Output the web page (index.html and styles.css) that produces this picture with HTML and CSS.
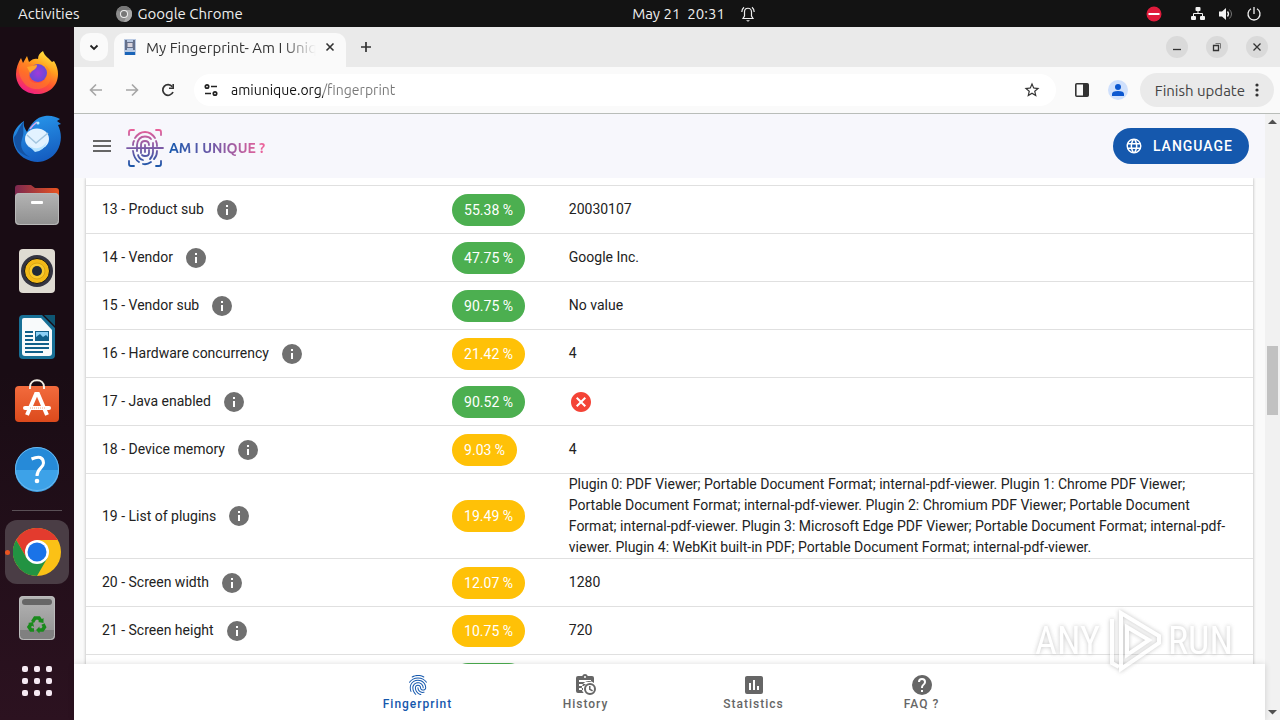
FILE: index.html
```html
<!DOCTYPE html>
<html lang="en">
<head>
  <meta charset="UTF-8" />
  <meta name="viewport" content="width=device-width, initial-scale=1.0" />
  <title>My Fingerprint- Am I Unique ?</title>
  <link rel="stylesheet" href="styles.css">
</head>
<body>
  <svg class="sprite" aria-hidden="true">
    <symbol id="info" viewBox="0 0 24 24"><path d="M13,9H11V7H13M13,17H11V11H13M12,2A10,10 0 0,0 2,12A10,10 0 0,0 12,22A10,10 0 0,0 22,12A10,10 0 0,0 12,2Z"/></symbol>
  </svg>

  <header class="topbar">
    <div class="topbar-left">
      <span>Activities</span>
      <span class="app-name">
        <svg width="16" height="16" viewBox="0 0 16 16"><circle cx="8" cy="8" r="8" fill="#8c8c8c"/><path d="M8 8L1 4A8 8 0 0 1 15 4Z" fill="#777"/><path d="M8 4H15A8 8 0 0 1 8 16L11 9Z" fill="#a8a8a8"/><circle cx="8" cy="8" r="4" fill="#eee"/><circle cx="8" cy="8" r="3" fill="#777"/></svg>
        Google Chrome
      </span>
    </div>
    <div class="clock">
      <span>May 21&nbsp; 20:31</span>
      <svg width="14" height="16" viewBox="0 0 14 16" fill="none" stroke="#eee" stroke-width="1.2"><path d="M2 12.5H12L10.500 10V6C10.500 1 3.500 1 3.500 6V10Z"/><path d="M.8 6Q.8 3 3 1.200M13.200 6Q13.200 3 11 1.200"/><path d="M5 14.200H9L7 15.800Z" fill="#eee" stroke="none"/></svg>
    </div>
    <div class="tray">
      <svg class="tray-stop" width="16" height="16" viewBox="0 0 16 16"><circle cx="8" cy="8" r="7.500" fill="#e01b3c"/><path d="M2.500 7H13.500V9H2.500Z" fill="#fff"/></svg>
      <svg width="16" height="16" viewBox="0 0 16 16" fill="#f2f2f2"><rect x="5.500" y="1" width="5" height="4" rx="1"/><rect x="1" y="10" width="5" height="4" rx="1"/><rect x="10" y="10" width="5" height="4" rx="1"/><path d="M8 4V7.500M3.500 11V7.500H12.500V11" stroke="#f2f2f2" fill="none"/></svg>
      <svg width="16" height="16" viewBox="0 0 16 16" fill="#f2f2f2"><path d="M1 5.500H4L8 2V14L4 10.500H1Z"/><path d="M9.500 5.500Q11.500 8 9.500 10.500" stroke="#f2f2f2" fill="none" stroke-width="1.300"/><path d="M11.500 3.500Q15.500 8 11.500 12.500" stroke="#777" fill="none"/></svg>
      <svg width="16" height="16" viewBox="0 0 16 16" fill="none" stroke="#f2f2f2" stroke-width="1.300"><path d="M5 2.800A6 6 0 1 0 11 2.800M8 1V8"/></svg>
    </div>
  </header>

  <div class="desktop">
    <nav class="dock" aria-label="Dock">
      <button class="dock-item" aria-label="Firefox">
        <svg viewBox="0 0 48 48">
          <defs>
            <linearGradient id="fox" x1=".8" y1="0" x2=".3" y2="1"><stop offset="0" stop-color="#fff044"/><stop offset=".35" stop-color="#ffa01e"/><stop offset=".65" stop-color="#ff5630"/><stop offset="1" stop-color="#f01c88"/></linearGradient>
            <radialGradient id="globe"><stop offset="0" stop-color="#a03ad8"/><stop offset="1" stop-color="#6549d8"/></radialGradient>
          </defs>
          <path d="M24 45C11 45 3 36 3 25C3 19 5 14 8 9L10 14L14 7L16 13C19 10 22 9 25 10C25 6 27 4 30 2C32 8 36 9 39 13L41 12C44 17 45 21 45 25C45 37 36 45 24 45Z" fill="url(#fox)"/>
          <circle cx="25" cy="24" r="9" fill="url(#globe)"/>
          <path d="M6 17C12 12 17 16 24 16C24 21 19 21 18 24C14 28 17 34 24 34C33 34 37 26 32 16C39 21 39 29 36 34C31 42 17 42 11 34C7 29 5 23 6 17Z" fill="#ff8422" opacity=".5"/>
          <path d="M14 18L24 16C24 20 19 21 17 24Z" fill="#ffa52a"/>
        </svg>
      </button>
      <button class="dock-item" aria-label="Thunderbird">
        <svg viewBox="0 0 48 48">
          <defs><linearGradient id="bird" x1=".2" y1="0" x2=".5" y2="1"><stop offset="0" stop-color="#2899ed"/><stop offset="1" stop-color="#155dc0"/></linearGradient></defs>
          <path d="M0 22C1 15 5 10 11 6C10 11 12 14 14 17C18 9 23 2 32 1C38 0 43 2 47 4L44 6L48 9L45 10C49 18 49 28 44 36C38 45 28 49 18 46C7 43 0 34 0 22Z" fill="url(#bird)"/>
          <path d="M1 22C4 20 5 13 11 6C9 14 12 16 9 24C6 33 11 39 17 42C7 40 1 33 1 22Z" fill="#1453a3"/>
          <ellipse cx="24" cy="24" rx="12" ry="10.500" fill="#e2f2ff"/>
          <path d="M14 20L23 28L35 18" fill="none" stroke="#a4c6df" stroke-width="1.500"/>
          <path d="M13 28Q24 39 34 27Q31 36 22 37Z" fill="#b8e4ff"/>
          <path d="M17 14Q20 10 24 7" fill="none" stroke="#e1a6e7" stroke-width="1.500"/><circle cx="25" cy="8" r="1.500" fill="#b3ecff"/>
        </svg>
      </button>
      <button class="dock-item" aria-label="Files">
        <svg viewBox="0 0 48 48">
          <defs><linearGradient id="folder"><stop offset="0" stop-color="#7b2850"/><stop offset="1" stop-color="#e95420"/></linearGradient><linearGradient id="grey" x1="0" y1="0" x2="0" y2="1"><stop offset="0" stop-color="#b4b4b4"/><stop offset="1" stop-color="#909090"/></linearGradient></defs>
          <path d="M2 20V7Q2 4 5 4H18L22 7H43Q46 7 46 10V20Z" fill="url(#folder)"/>
          <rect x="2" y="12" width="44" height="32" rx="4" fill="url(#grey)"/><rect x="2.500" y="12.500" width="43" height="31" rx="4" fill="none" stroke="#b9b9b9"/>
          <rect x="18" y="20" width="12" height="3" rx="1" fill="#fff"/>
        </svg>
      </button>
      <button class="dock-item" aria-label="Rhythmbox">
        <svg viewBox="0 0 48 48"><rect x="6" y="2" width="36" height="44" rx="4" fill="#dfdbd2"/><circle cx="24" cy="24" r="16" fill="#343441"/><circle cx="24" cy="24" r="12.500" fill="#f3b917" stroke="#151515"/><circle cx="24" cy="24" r="8" fill="#f8c92c" stroke="#d9a715"/><circle cx="24" cy="24" r="5" fill="#202b38"/></svg>
      </button>
      <button class="dock-item" aria-label="LibreOffice Writer">
        <svg viewBox="0 0 48 48">
          <path d="M10 2H29L42 15V42Q42 46 38 46H10Q6 46 6 42V6Q6 2 10 2Z" fill="#187096"/><path d="M31 2H42V13Z" fill="#0e5673"/>
          <path d="M11 5H28L39 17V40Q39 43 36 43H12Q9 43 9 40V7Q9 5 11 5Z" fill="#f8fafb"/>
          <path d="M12 19H20M12 23H20M12 27H20M12 31H36M12 35H36M12 39H30" stroke="#11608a" stroke-width="2"/>
          <rect x="22.500" y="18.500" width="13" height="9" fill="#8bcff5" stroke="#11608a"/><path d="M23 27V24L27 21L30 24L33 22L35 24V27Z" fill="#11608a"/>
        </svg>
      </button>
      <button class="dock-item" aria-label="Ubuntu Software">
        <svg viewBox="0 0 48 48">
          <defs><linearGradient id="bag" x1="0" y1="0" x2="0" y2="1"><stop offset="0" stop-color="#f26b3d"/><stop offset="1" stop-color="#dc4a1c"/></linearGradient></defs>
          <rect x="2" y="7" width="44" height="36" rx="4" fill="url(#bag)"/><path d="M17 10V8C17-1 31-1 31 8V10" fill="none" stroke="#f4eee4" stroke-width="2"/>
          <path d="M14 36L23 15H25L34 36" fill="none" stroke="#fff" stroke-width="4"/><rect x="10" y="27" width="28" height="4" rx="2" fill="#fff"/><path d="M17 29H32" stroke="#f3a685" stroke-dasharray="1 1"/>
        </svg>
      </button>
      <button class="dock-item" aria-label="Help">
        <svg viewBox="0 0 48 48"><circle cx="24" cy="24" r="22" fill="#268ad8"/><path d="M2 25H46A22 22 0 0 1 2 25Z" fill="#3da2e8"/><circle cx="24" cy="24" r="21.500" fill="none" stroke="#6ab8ee"/><path d="M18.500 14Q30 9 30.500 18C30.500 23 24 23 24 31" fill="none" stroke="#fff" stroke-width="3"/><circle cx="24" cy="36" r="2.300" fill="#fff"/></svg>
      </button>
      <hr>
      <button class="dock-item active" aria-label="Google Chrome">
        <svg viewBox="0 0 48 48"><circle cx="24" cy="24" r="24" fill="#fbc116"/><path d="M24 12H44.800A24 24 0 0 0 3.200 12L13.600 30Z" fill="#e33b2e"/><path d="M3.200 12A24 24 0 0 0 24 48L34.400 30L13.600 30Z" fill="#229342"/><circle cx="24" cy="24" r="12" fill="#fff"/><circle cx="24" cy="24" r="9.500" fill="#1a73e8"/></svg>
      </button>
      <button class="dock-item" aria-label="Trash">
        <svg viewBox="0 0 48 48"><rect x="6" y="2" width="36" height="44" rx="4" fill="url(#grey)"/><path d="M7 36H41V42Q41 45 38 45H10Q7 45 7 42Z" fill="#808080"/><rect x="6.500" y="2.500" width="35" height="43" rx="4" fill="none" stroke="#bcbcbc"/><rect x="9" y="5" width="30" height="6" rx="3" fill="#666"/>
          <g fill="none" stroke="#198a1c" stroke-width="3.500"><path d="M19.500 28L22 24H26L28 27"/><path d="M30 30L31.500 33L29.500 36H26"/><path d="M21 36H18L16 33L18 30"/></g><path d="M25 28L30.500 29V24ZM26.500 32.500L23 36L26.500 39.500ZM15 29L20 28L21 33Z" fill="#198a1c"/></svg>
      </button>
      <button class="dock-item apps" aria-label="Show Applications">
        <svg viewBox="0 0 48 48" fill="#f5e9f2"><g id="dots"><rect x="9" y="9" width="6" height="6" rx="2"/><rect x="21" y="9" width="6" height="6" rx="2"/><rect x="33" y="9" width="6" height="6" rx="2"/></g><use href="#dots" y="12"/><use href="#dots" y="24"/></svg>
      </button>
    </nav>

    <div class="browser">
      <div class="tabstrip">
        <button class="tab-search" aria-label="Search tabs"><svg width="14" height="14" viewBox="0 0 14 14"><path d="M3.500 5.500L7 9L10.500 5.500" fill="none" stroke="#222" stroke-width="1.800"/></svg></button>
        <div class="tab">
          <svg width="16" height="16" viewBox="0 0 16 16"><path d="M2 0H14V16H2Z" fill="#b9c9e2"/><path d="M3 1H5V3H11V1H13V11H11V9H5V11H3Z" fill="#65708a"/><path d="M5.500 4H10.500V8H5.500Z" fill="#d9d4dc"/><path d="M3 13H13V16H3Z" fill="#1a64b8"/></svg>
          <span class="tab-title">My Fingerprint- Am I Unique ?</span>
          <button class="plain" aria-label="Close tab"><svg width="12" height="12" viewBox="0 0 12 12"><path d="M2.500 2.500L9.500 9.500M9.500 2.500L2.500 9.500" stroke="#333" stroke-width="1.600"/></svg></button>
        </div>
        <button class="plain new-tab" aria-label="New tab"><svg width="14" height="14" viewBox="0 0 14 14"><path d="M7 2V12M2 7H12" stroke="#333" stroke-width="1.700"/></svg></button>
        <div class="window-buttons">
          <button aria-label="Minimize"><svg viewBox="0 0 22 22"><path d="M7 13.500H15"/></svg></button>
          <button aria-label="Restore"><svg viewBox="0 0 22 22"><path d="M7.500 9.500H12.500V14.500H7.500Z"/><path d="M9.500 7.500H14.500V12.500" stroke-width="1" stroke="#777"/></svg></button>
          <button aria-label="Close"><svg viewBox="0 0 22 22"><path d="M7.500 7.500L14.500 14.500M14.500 7.500L7.500 14.500"/></svg></button>
        </div>
      </div>

      <div class="toolbar">
        <button class="tool" aria-label="Back"><svg width="16" height="16" viewBox="0 0 16 16"><path d="M14 8H3M8 2.500L2.500 8L8 13.500" stroke="#a5a5a5"/></svg></button>
        <button class="tool" aria-label="Forward"><svg width="16" height="16" viewBox="0 0 16 16"><path d="M2 8H13M8 2.500L13.500 8L8 13.500" stroke="#a5a5a5"/></svg></button>
        <button class="tool" aria-label="Reload"><svg width="16" height="16" viewBox="0 0 16 16"><path d="M13 10A5.300 5.300 0 1 1 12.300 4.800" stroke-width="1.700"/><path d="M14 2V7H9V5.400H12.400V2Z" fill="#333" stroke="none"/></svg></button>
        <div class="omnibox">
          <svg width="16" height="16" viewBox="0 0 16 16" fill="none" stroke="#222" stroke-width="1.700"><circle cx="4" cy="4.500" r="1.700"/><path d="M8 4.500H14M2 11.500H8"/><circle cx="12" cy="11.500" r="1.700"/></svg>
          <input type="text" value="amiunique.org/fingerprint" aria-label="Address">
          <button class="plain" aria-label="Bookmark this tab"><svg width="18" height="18" viewBox="0 0 24 24" fill="#333"><path d="M22 9.240l-7.190-.62L12 2 9.190 8.630 2 9.240l5.460 4.730L5.820 21 12 17.270 18.180 21l-1.630-7.030L22 9.240zM12 15.400l-3.760 2.270 1-4.280-3.320-2.880 4.380-.38L12 6.100l1.710 4.040 4.380.38-3.320 2.880 1 4.280L12 15.400z"/></svg></button>
        </div>
        <button class="tool side-panel" aria-label="Side panel"><svg width="16" height="16" viewBox="0 0 16 16"><rect x="1.800" y="1.800" width="12.400" height="12.400" rx="1"/><path d="M9 2H14V14H9Z" fill="#333" stroke="none"/></svg></button>
        <button class="tool" aria-label="Profile"><svg width="20" height="20" viewBox="0 0 20 20"><circle cx="10" cy="10" r="10" fill="#cfe0fc" stroke="none"/><circle cx="10" cy="7" r="3" fill="#0b57d0" stroke="none"/><path d="M4 16V14Q4 11 10 11Q16 11 16 14V16Z" fill="#0b57d0" stroke="none"/></svg></button>
        <button class="update">Finish update <svg width="4" height="16" viewBox="0 0 4 16" fill="#333"><circle cx="2" cy="3" r="1.600"/><circle cx="2" cy="8" r="1.600"/><circle cx="2" cy="13" r="1.600"/></svg></button>
      </div>

      <div class="viewport">
        <div class="page">
          <header class="appbar">
            <button class="plain menu" aria-label="Menu"><svg width="24" height="24" viewBox="0 0 24 24" fill="#666"><path d="M3,6H21V8H3V6M3,11H21V13H3V11M3,16H21V18H3V16Z"/></svg></button>
            <a class="brand" href="#">
              <svg width="38" height="40" viewBox="0 0 38 40" fill="none" stroke="url(#ink)" stroke-width="1.800" stroke-linecap="round">
                <defs><linearGradient id="ink" gradientUnits="userSpaceOnUse" x1="0" y1="2" x2="0" y2="38"><stop offset="0" stop-color="#e8619a"/><stop offset=".5" stop-color="#7b5aa6"/><stop offset="1" stop-color="#1c56a8"/></linearGradient></defs>
                <path d="M3 7V4Q3 2 5 2H8M30 2H33Q35 2 35 4V7M35 33V36Q35 38 33 38H30M8 38H5Q3 38 3 36V33"/>
                <path d="M1 20.100L37 20"/>
                <path d="M9 10Q13 4 19 4Q25 4 29 10M7 17Q7 14 8 13M30 13Q31 15 31 18M7 23Q8 31 13 34M31 23Q31 28 28 31M17 36Q21 37 25 34"/>
                <path d="M11 23V17Q12 8.500 19 8.500Q23 8.500 25 11M27 15V24Q27 28 24 31M12 27Q13 31 17 32M15 25V17Q15 13 19 13Q23 13 23 17M23 22V25Q23 28 19 28Q17 28 16 27M19 17V24"/>
              </svg>
              <span>AM I UNIQUE ?</span>
            </a>
            <button class="language"><svg width="18" height="18" viewBox="0 0 24 24" fill="#fff"><path d="M16.360,14C16.440,13.340 16.500,12.680 16.500,12C16.500,11.320 16.440,10.660 16.360,10H19.740C19.900,10.640 20,11.310 20,12C20,12.690 19.900,13.360 19.740,14M14.590,19.560C15.190,18.450 15.650,17.250 15.970,16H18.920C17.960,17.650 16.430,18.930 14.590,19.560M14.340,14H9.660C9.560,13.340 9.500,12.680 9.500,12C9.500,11.320 9.560,10.650 9.660,10H14.340C14.430,10.650 14.500,11.320 14.500,12C14.500,12.680 14.430,13.340 14.340,14M12,19.960C11.170,18.760 10.500,17.430 10.090,16H13.910C13.500,17.430 12.830,18.760 12,19.960M8,8H5.080C6.030,6.340 7.570,5.060 9.400,4.440C8.800,5.550 8.350,6.750 8,8M5.080,16H8C8.350,17.250 8.800,18.450 9.400,19.560C7.570,18.930 6.030,17.650 5.080,16M4.260,14C4.100,13.360 4,12.690 4,12C4,11.310 4.100,10.640 4.260,10H7.640C7.560,10.660 7.500,11.320 7.500,12C7.500,12.680 7.560,13.340 7.640,14M12,4.030C12.830,5.230 13.500,6.570 13.910,8H10.090C10.500,6.570 11.170,5.230 12,4.030M18.920,8H15.970C15.650,6.750 15.190,5.550 14.590,4.440C16.430,5.070 17.960,6.340 18.920,8M12,2C6.470,2 2,6.500 2,12A10,10 0 0,0 12,22A10,10 0 0,0 22,12A10,10 0 0,0 12,2Z"/></svg>LANGUAGE</button>
          </header>

          <main class="content">
            <table class="attributes">
              <colgroup><col class="col-name"><col class="col-ratio"><col></colgroup>
              <tbody>
                <tr class="row-edge"><td colspan="3"></td></tr>
                <tr>
                  <td><span class="name">13 - Product sub <svg class="info"><use href="#info"/></svg></span></td>
                  <td><span class="chip green">55.38 %</span></td>
                  <td>20030107</td>
                </tr>
                <tr>
                  <td><span class="name">14 - Vendor <svg class="info"><use href="#info"/></svg></span></td>
                  <td><span class="chip green">47.75 %</span></td>
                  <td>Google Inc.</td>
                </tr>
                <tr>
                  <td><span class="name">15 - Vendor sub <svg class="info"><use href="#info"/></svg></span></td>
                  <td><span class="chip green">90.75 %</span></td>
                  <td>No value</td>
                </tr>
                <tr>
                  <td><span class="name">16 - Hardware concurrency <svg class="info"><use href="#info"/></svg></span></td>
                  <td><span class="chip amber">21.42 %</span></td>
                  <td>4</td>
                </tr>
                <tr>
                  <td><span class="name">17 - Java enabled <svg class="info"><use href="#info"/></svg></span></td>
                  <td><span class="chip green">90.52 %</span></td>
                  <td><svg class="no" viewBox="0 0 24 24"><path d="M12,2C17.530,2 22,6.470 22,12C22,17.530 17.530,22 12,22C6.470,22 2,17.530 2,12C2,6.470 6.470,2 12,2M15.590,7L12,10.590L8.410,7L7,8.410L10.590,12L7,15.590L8.410,17L12,13.410L15.590,17L17,15.590L13.410,12L17,8.410L15.590,7Z"/></svg></td>
                </tr>
                <tr>
                  <td><span class="name">18 - Device memory <svg class="info"><use href="#info"/></svg></span></td>
                  <td><span class="chip amber">9.03 %</span></td>
                  <td>4</td>
                </tr>
                <tr>
                  <td><span class="name">19 - List of plugins <svg class="info"><use href="#info"/></svg></span></td>
                  <td><span class="chip amber">19.49 %</span></td>
                  <td>Plugin 0: PDF Viewer; Portable Document Format; internal-pdf-viewer. Plugin 1: Chrome PDF Viewer; Portable Document Format; internal-pdf-viewer. Plugin 2: Chromium PDF Viewer; Portable Document Format; internal-pdf-viewer. Plugin 3: Microsoft Edge PDF Viewer; Portable Document Format; internal-pdf-viewer. Plugin 4: WebKit built-in PDF; Portable Document Format; internal-pdf-viewer.</td>
                </tr>
                <tr>
                  <td><span class="name">20 - Screen width <svg class="info"><use href="#info"/></svg></span></td>
                  <td><span class="chip amber">12.07 %</span></td>
                  <td>1280</td>
                </tr>
                <tr>
                  <td><span class="name">21 - Screen height <svg class="info"><use href="#info"/></svg></span></td>
                  <td><span class="chip amber">10.75 %</span></td>
                  <td>720</td>
                </tr>
                <tr>
                  <td></td>
                  <td><span class="chip green chip-empty"></span></td>
                  <td></td>
                </tr>
              </tbody>
            </table>
          </main>

          <nav class="bottom-nav">
            <a class="current" href="#">
              <svg viewBox="0 0 24 24"><path d="M17.810,4.470C17.730,4.470 17.650,4.450 17.580,4.410C15.660,3.420 14,3 12,3C10.030,3 8.150,3.470 6.440,4.410C6.200,4.540 5.900,4.450 5.760,4.210C5.630,3.970 5.720,3.660 5.960,3.530C7.820,2.500 9.860,2 12,2C14.140,2 16,2.470 18.040,3.500C18.290,3.650 18.380,3.950 18.250,4.190C18.160,4.370 18,4.470 17.810,4.470M3.500,9.720C3.400,9.720 3.300,9.690 3.210,9.630C3,9.470 2.930,9.160 3.090,8.930C4.080,7.530 5.340,6.430 6.840,5.660C10,4.040 14,4.030 17.150,5.650C18.650,6.420 19.910,7.500 20.900,8.900C21.060,9.120 21,9.440 20.780,9.600C20.550,9.760 20.240,9.710 20.080,9.500C19.180,8.220 18.040,7.230 16.690,6.540C13.820,5.070 10.150,5.070 7.290,6.550C5.930,7.250 4.790,8.250 3.890,9.500C3.810,9.650 3.660,9.720 3.500,9.720M9.750,21.790C9.620,21.790 9.500,21.740 9.400,21.640C8.530,20.770 8.060,20.210 7.390,19C6.700,17.770 6.340,16.270 6.340,14.660C6.340,11.690 8.880,9.270 12,9.270C15.120,9.270 17.660,11.690 17.660,14.660A0.500,0.500 0 0,1 17.160,15.160A0.500,0.500 0 0,1 16.660,14.660C16.660,12.240 14.570,10.270 12,10.270C9.430,10.270 7.340,12.240 7.340,14.660C7.340,16.100 7.660,17.430 8.270,18.500C8.910,19.660 9.350,20.150 10.120,20.930C10.310,21.130 10.310,21.440 10.120,21.640C10,21.740 9.880,21.790 9.750,21.790M16.920,19.940C15.730,19.940 14.680,19.640 13.820,19.050C12.330,18.040 11.440,16.400 11.440,14.660A0.500,0.500 0 0,1 11.940,14.160A0.500,0.500 0 0,1 12.440,14.660C12.440,16.070 13.160,17.400 14.380,18.220C15.090,18.700 15.920,18.930 16.920,18.930C17.160,18.930 17.560,18.900 17.960,18.830C18.230,18.780 18.500,18.960 18.540,19.240C18.590,19.500 18.410,19.770 18.130,19.820C17.560,19.930 17.060,19.940 16.920,19.940M14.910,22C14.870,22 14.820,22 14.780,22C13.190,21.540 12.150,20.950 11.060,19.880C9.660,18.500 8.890,16.640 8.890,14.660C8.890,13.040 10.270,11.720 11.970,11.720C13.670,11.720 15.050,13.040 15.050,14.660C15.050,15.730 16,16.600 17.130,16.600C18.280,16.600 19.210,15.730 19.210,14.660C19.210,10.890 15.960,7.830 11.960,7.830C9.120,7.830 6.500,9.410 5.350,11.860C4.960,12.670 4.760,13.620 4.760,14.660C4.760,15.440 4.830,16.670 5.430,18.270C5.530,18.530 5.400,18.820 5.140,18.910C4.880,19 4.590,18.870 4.500,18.620C4,17.310 3.770,16 3.770,14.660C3.770,13.460 4,12.370 4.450,11.420C5.780,8.630 8.730,6.820 11.960,6.820C16.500,6.820 20.210,10.330 20.210,14.650C20.210,16.270 18.830,17.590 17.130,17.590C15.430,17.590 14.050,16.270 14.050,14.650C14.050,13.580 13.120,12.710 11.970,12.710C10.820,12.710 9.890,13.580 9.890,14.650C9.890,16.360 10.550,17.960 11.760,19.160C12.710,20.100 13.620,20.620 15.030,21C15.300,21.080 15.450,21.360 15.380,21.620C15.330,21.850 15.120,22 14.910,22Z"/></svg>
              Fingerprint
            </a>
            <a href="#">
              <svg viewBox="0 0 24 24"><path fill-rule="evenodd" d="M4 3H8.200A3 3 0 0 1 13.800 3H18Q20 3 20 5V10.100A7 7 0 0 0 9.700 20H4Q2 20 2 18V5Q2 3 4 3ZM11 3A1 1 0 1 0 11 5A1 1 0 1 0 11 3ZM5 7V9H17V7ZM5 11V13H10L12 11ZM5 15V17H9V15Z"/><path fill-rule="evenodd" d="M16 10A6 6 0 1 0 16 22A6 6 0 1 0 16 10ZM16 12A4 4 0 1 1 16 20A4 4 0 1 1 16 12Z"/><path d="M15 13H16.500V15.800L19 17.300L18.200 18.600L15 16.700Z"/></svg>
              History
            </a>
            <a href="#">
              <svg viewBox="0 0 24 24"><path d="M9 17H7V10H9V17M13 17H11V7H13V17M17 17H15V13H17V17M19 3H5C3.890 3 3 3.890 3 5V19A2 2 0 0 0 5 21H19A2 2 0 0 0 21 19V5C21 3.890 20.100 3 19 3Z"/></svg>
              Statistics
            </a>
            <a href="#">
              <svg viewBox="0 0 24 24"><path d="M15.070,11.250L14.170,12.170C13.450,12.890 13,13.500 13,15H11V14.500C11,13.390 11.450,12.390 12.170,11.670L13.410,10.410C13.780,10.050 14,9.550 14,9C14,7.890 13.100,7 12,7A2,2 0 0,0 10,9H8A4,4 0 0,1 12,5A4,4 0 0,1 16,9C16,9.880 15.640,10.670 15.070,11.250M13,19H11V17H13M12,2A10,10 0 0,0 2,12A10,10 0 0,0 12,22A10,10 0 0,0 22,12C22,6.470 17.500,2 12,2Z"/></svg>
              FAQ ?
            </a>
          </nav>
        </div>

        <div class="scrollbar">
          <svg width="15" height="16" viewBox="0 0 15 16"><path d="M3 10H12L7.500 5.500Z" fill="#505050"/></svg>
          <div class="track"><div class="thumb"></div></div>
          <svg width="15" height="16" viewBox="0 0 15 16"><path d="M3 6H12L7.500 10.500Z" fill="#505050"/></svg>
        </div>
      </div>
    </div>
  </div>

  <div class="watermark">
    <span>ANY</span>
    <svg width="60" height="64" viewBox="0 0 60 64" fill="none" stroke="#fff" stroke-width="4"><path d="M8 10V54L15 58"/><path d="M17 4L55 27V34L17 60Z"/><path d="M23 18V46L45 31Z"/></svg>
    <span>RUN</span>
  </div>
</body>
</html>
```
FILE: styles.css
```css
:root {
  --ui-font: "Ubuntu", "Noto Sans", sans-serif;
  --page-font: Roboto, sans-serif;
  --blue: #1558ad;
  --green: #4caf50;
  --amber: #ffc107;
  --line: #e0e0e0;
}

* {
  margin: 0;
  padding: 0;
  box-sizing: border-box;
}

body {
  height: 100vh;
  display: flex;
  flex-direction: column;
  overflow: hidden;
  font-family: var(--ui-font);
  font-size: 15px;
  color: #333;
}

button {
  border: none;
  background: none;
  font-family: inherit;
  cursor: pointer;
}

a {
  color: inherit;
  text-decoration: none;
}

svg {
  display: block;
  flex: none;
}

.sprite {
  position: absolute;
  width: 0;
  height: 0;
}

.plain {
  display: flex;
}

/* Top bar */
.topbar {
  height: 27px;
  flex: none;
  display: grid;
  grid-template-columns: 1fr auto 1fr;
  align-items: center;
  background: #131313;
  color: #eee;
  line-height: 20px;
}

.topbar-left {
  display: flex;
  gap: 36px;
  padding-left: 18px;
}

.app-name {
  display: flex;
  align-items: center;
  gap: 6px;
}

.clock {
  display: flex;
  align-items: center;
  gap: 16px;
  padding-left: 107px;
}

.tray {
  display: flex;
  justify-content: flex-end;
  gap: 12px;
  padding-right: 18px;
}

.tray-stop {
  margin-right: 16px;
}

/* Dock */
.desktop {
  flex: 1;
  min-height: 0;
  display: flex;
}

.dock {
  width: 74px;
  flex: none;
  padding-top: 13px;
  display: flex;
  flex-direction: column;
  align-items: center;
  background: linear-gradient(#190c14 50%, #2c1220);
}

.dock-item {
  width: 64px;
  height: 64px;
  margin: 1px 0;
  flex: none;
  display: grid;
  place-items: center;
  border-radius: 12px;
}

.dock-item svg {
  width: 48px;
  height: 48px;
}

.dock-item.active {
  position: relative;
  background: #4a3d45;
}

.dock-item.active::before {
  content: "";
  position: absolute;
  left: 0;
  width: 5px;
  height: 5px;
  border-radius: 50%;
  background: #e95420;
}

.dock-item.apps {
  height: 60px;
  margin: 0;
}

.dock hr {
  width: 50px;
  height: 1px;
  margin: 8px 0;
  flex: none;
  border: none;
  background: #5a5056;
}

/* Browser window */
.browser {
  flex: 1;
  min-width: 0;
  display: flex;
  flex-direction: column;
  background: #fafafa;
}

.tabstrip {
  height: 40px;
  flex: none;
  display: flex;
  align-items: center;
  padding: 0 12px 0 6px;
  background: #eaeaea;
}

.tab-search {
  width: 28px;
  height: 28px;
  margin-right: 6px;
  display: grid;
  place-items: center;
  border-radius: 10px;
  background: #fafafa;
}

.tab {
  width: 232px;
  height: 34px;
  align-self: flex-end;
  display: flex;
  align-items: center;
  gap: 8px;
  padding: 0 10px 6px 8px;
  border-radius: 10px 10px 0 0;
  background: #fafafa;
}

.tab-title {
  flex: 1;
  overflow: hidden;
  white-space: nowrap;
  -webkit-mask-image: linear-gradient(to right, #000 80%, transparent);
  mask-image: linear-gradient(to right, #000 80%, transparent);
}

.new-tab {
  margin-left: 13px;
}

.window-buttons {
  margin-left: auto;
  display: flex;
  gap: 18px;
}

.window-buttons button {
  width: 22px;
  height: 22px;
  border-radius: 50%;
  background: #dadada;
}

.window-buttons svg {
  fill: none;
  stroke: #333;
  stroke-width: 1.3;
}

.toolbar {
  height: 47px;
  flex: none;
  display: flex;
  align-items: center;
  gap: 16px;
  padding: 0 6px 0 12px;
  border-bottom: 1px solid #b9bdb9;
}

.tool {
  width: 20px;
  height: 20px;
  display: grid;
  place-items: center;
}

.tool svg {
  fill: none;
  stroke: #333;
  stroke-width: 1.6;
}

.omnibox {
  flex: 1;
  height: 32px;
  display: flex;
  align-items: center;
  gap: 12px;
  padding: 0 15px 0 9px;
  border-radius: 16px;
  background: #fff;
}

.omnibox input {
  flex: 1;
  min-width: 0;
  border: none;
  outline: none;
  font: 14px var(--ui-font);
  color: transparent;
  background: linear-gradient(to right, #111 92px, #777 92px);
  -webkit-background-clip: text;
  background-clip: text;
}

.update {
  height: 34px;
  margin-left: -4px;
  display: flex;
  align-items: center;
  gap: 10px;
  padding: 0 15px;
  border-radius: 17px;
  background: #eaeaea;
  color: #444;
  font-size: 15px;
}

/* Web page */
.viewport {
  flex: 1;
  min-height: 0;
  display: flex;
}

.page {
  flex: 1;
  min-width: 0;
  display: flex;
  flex-direction: column;
  font-family: var(--page-font);
  font-size: 14px;
}

.appbar {
  height: 64px;
  flex: none;
  display: flex;
  align-items: center;
  padding: 0 16px;
  background: #f7f7fc;
}

.brand {
  display: flex;
  align-items: center;
  gap: 5px;
  margin-left: 12px;
  padding-top: 4px;
  font: bold 14px var(--ui-font);
}

.brand span {
  color: transparent;
  background: linear-gradient(to right, #1558ad, #7b5aa6 50%, #f0649a);
  -webkit-background-clip: text;
  background-clip: text;
}

.language {
  height: 36px;
  margin-left: auto;
  display: flex;
  align-items: center;
  gap: 10px;
  padding: 0 16px 0 12px;
  border-radius: 18px;
  background: var(--blue);
  color: #fff;
  font-size: 14px;
  font-weight: 500;
  letter-spacing: 1px;
}

.content {
  flex: 1;
  min-height: 0;
  overflow: hidden;
  padding: 0 12px;
}

.attributes {
  width: 100%;
  table-layout: fixed;
  border-collapse: separate;
  border-spacing: 0;
  background: #fff;
  box-shadow: 0 0 3px rgba(0, 0, 0, 0.3);
  color: #222;
  line-height: 21px;
}

.col-name {
  width: 30%;
}

.col-ratio {
  width: 10%;
}

.attributes td {
  height: 48px;
  padding: 0 16px;
  border-bottom: 1px solid var(--line);
}

.attributes .row-edge td {
  height: 8px;
}

.name {
  display: flex;
  align-items: center;
  gap: 11px;
}

.info {
  width: 24px;
  height: 24px;
  fill: #707070;
}

.no {
  width: 24px;
  height: 24px;
  fill: #f44336;
}

.chip {
  display: inline-block;
  padding: 0 12px;
  border-radius: 16px;
  line-height: 32px;
  vertical-align: middle;
  color: #fff;
}

.chip.green {
  background: var(--green);
}

.chip.amber {
  background: var(--amber);
}

.chip-empty {
  width: 73px;
  height: 32px;
}

.bottom-nav {
  height: 56px;
  flex: none;
  display: flex;
  justify-content: center;
  position: relative;
  background: #fff;
  box-shadow: 0 0 6px rgba(0, 0, 0, 0.14);
  color: #666;
  font-size: 12px;
  font-weight: 500;
  line-height: 14px;
  letter-spacing: 1px;
}

.bottom-nav a {
  width: 168px;
  display: flex;
  flex-direction: column;
  align-items: center;
  justify-content: center;
}

.bottom-nav svg {
  width: 24px;
  height: 24px;
  fill: currentColor;
}

.bottom-nav .current {
  color: var(--blue);
}

.scrollbar {
  width: 15px;
  flex: none;
  display: flex;
  flex-direction: column;
  background: #f1f1f1;
}

.track {
  flex: 1;
  padding: 216px 2px 0;
}

.thumb {
  height: 69px;
  background: #c1c1c1;
}

.watermark {
  position: absolute;
  right: 47px;
  bottom: 47px;
  display: flex;
  align-items: center;
  gap: 4px;
  font: 38px "Liberation Sans Narrow", "Roboto Condensed", "DejaVu Sans Condensed", sans-serif;
  color: #fff;
  opacity: 0.7;
  filter: drop-shadow(0 0 2px #aaa);
  pointer-events: none;
}
```
